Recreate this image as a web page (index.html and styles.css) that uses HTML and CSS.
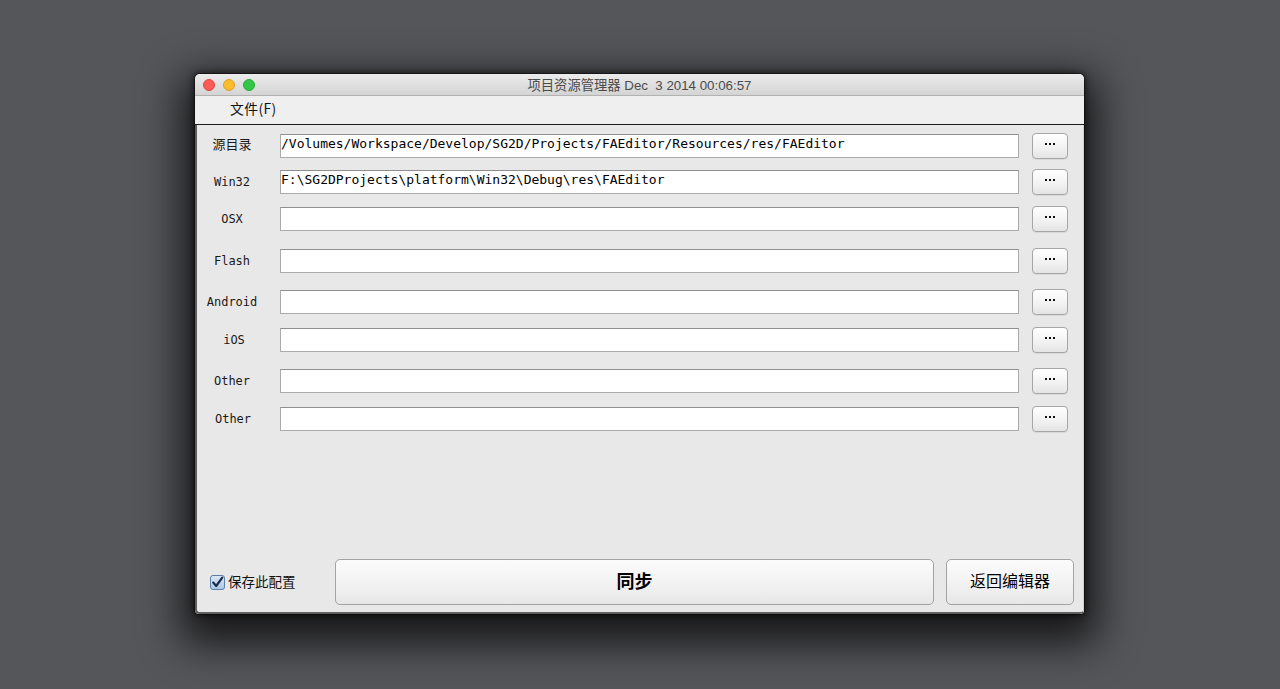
FILE: index.html
```html
<!DOCTYPE html>
<html lang="zh">
<head>
<meta charset="utf-8">
<title>项目资源管理器</title>
<link rel="stylesheet" href="styles.css">
</head>
<body>
<div class="window">
  <div class="titlebar">
    <div class="lights">
      <span class="light red"></span>
      <span class="light yellow"></span>
      <span class="light green"></span>
    </div>
    <div class="title">项目资源管理器 Dec&nbsp;&nbsp;3 2014 00:06:57</div>
  </div>
  <div class="menubar"><span class="menu-item">文件(F)</span></div>
  <div class="content">
    <div class="rows">
      <div class="row">
        <span class="label cjk">源目录</span>
        <div class="field">/Volumes/Workspace/Develop/SG2D/Projects/FAEditor/Resources/res/FAEditor</div>
        <button class="browse"><span class="dots"></span></button>
      </div>
      <div class="row g36">
        <span class="label">Win32</span>
        <div class="field">F:\SG2DProjects\platform\Win32\Debug\res\FAEditor</div>
        <button class="browse"><span class="dots"></span></button>
      </div>
      <div class="row g37">
        <span class="label">OSX</span>
        <div class="field"></div>
        <button class="browse"><span class="dots"></span></button>
      </div>
      <div class="row g42">
        <span class="label">Flash</span>
        <div class="field"></div>
        <button class="browse"><span class="dots"></span></button>
      </div>
      <div class="row g41">
        <span class="label">Android</span>
        <div class="field"></div>
        <button class="browse"><span class="dots"></span></button>
      </div>
      <div class="row g38">
        <span class="label shift">iOS</span>
        <div class="field"></div>
        <button class="browse"><span class="dots"></span></button>
      </div>
      <div class="row g41">
        <span class="label">Other</span>
        <div class="field"></div>
        <button class="browse"><span class="dots"></span></button>
      </div>
      <div class="row g38">
        <span class="label shift1">Other</span>
        <div class="field"></div>
        <button class="browse"><span class="dots"></span></button>
      </div>
    </div>
    <div class="bottom">
      <label class="check">
        <svg class="box" width="15" height="15" viewBox="0 0 15 15">
          <defs>
            <linearGradient id="cb" x1="0" y1="0" x2="0" y2="1">
              <stop offset="0" stop-color="#dbe9f7"/>
              <stop offset="1" stop-color="#a9c7e6"/>
            </linearGradient>
          </defs>
          <rect x="0.5" y="0.5" width="14" height="14" rx="2.5" fill="url(#cb)" stroke="#5d7ea5"/>
          <path d="M3.2 7.6 L6.2 11 L12.2 2.6" fill="none" stroke="#1b2d4a" stroke-width="2.2" stroke-linecap="round" stroke-linejoin="round"/>
        </svg>
        <span class="check-text">保存此配置</span>
      </label>
      <button class="big sync">同步</button>
      <button class="big back">返回编辑器</button>
    </div>
  </div>
</div>
</body>
</html>
```

FILE: styles.css
```css
html, body {
  margin: 0;
  padding: 0;
}
body {
  width: 1280px;
  height: 689px;
  background: #55565a;
  overflow: hidden;
  padding: 74px 0 0 195px;
  box-sizing: border-box;
  font-family: "Liberation Sans", "Noto Sans CJK SC", sans-serif;
}
.window {
  width: 889px;
  height: 540px;
  display: flex;
  flex-direction: column;
  background: #e8e8e8;
  border-radius: 5px 5px 4px 4px;
  box-shadow: 0 16px 40px 14px rgba(0, 0, 0, 0.72), 0 0 6px 2px rgba(0, 0, 0, 0.5), 0 0 0 1px rgba(0, 0, 0, 0.4);
  overflow: hidden;
}
.titlebar {
  height: 22px;
  flex: none;
  position: relative;
  background: linear-gradient(#ececec, #d4d4d4);
  border-bottom: 1px solid #b2b2b2;
  box-sizing: border-box;
  display: flex;
  align-items: center;
  justify-content: center;
}
.lights {
  position: absolute;
  left: 8px;
  top: 5px;
  display: flex;
  gap: 8px;
}
.light {
  width: 12px;
  height: 12px;
  border-radius: 50%;
  box-sizing: border-box;
}
.red { background: #fc5b57; border: 1px solid #de4640; }
.yellow { background: #fdbc2e; border: 1px solid #dea126; }
.green { background: #33c748; border: 1px solid #27aa35; }
.title {
  font-size: 13.3px;
  color: #4b4b4b;
  padding-bottom: 1px;
}
.menubar {
  height: 29px;
  flex: none;
  background: #efefef;
  border-bottom: 1px solid #1e1e1e;
  box-sizing: border-box;
  display: flex;
  align-items: center;
  padding-left: 35px;
  padding-bottom: 4px;
}
.menu-item {
  font-family: "Noto Sans CJK SC", sans-serif;
  font-size: 13.8px;
  letter-spacing: 0.4px;
  color: #111;
}
.content {
  flex: 1;
  display: flex;
  flex-direction: column;
  background: #e8e8e8;
  border-left: 2px solid #5f5f5f;
  border-bottom: 2px solid #5f5f5f;
  border-right: 1px solid #cfcfcf;
  border-radius: 0 0 4px 4px;
  padding-top: 9px;
  padding-bottom: 7px;
  box-sizing: border-box;
}
.rows {
  flex: 1;
  display: flex;
  flex-direction: column;
}
.row {
  display: flex;
  align-items: center;
  height: 24px;
}
.g36 { margin-top: 12px; }
.g37 { margin-top: 13px; }
.g38 { margin-top: 14px; }
.g41 { margin-top: 17px; }
.g42 { margin-top: 18px; }
.label {
  width: 70px;
  flex: none;
  text-align: center;
  font-family: "DejaVu Sans Mono", "Noto Sans CJK SC", monospace;
  font-size: 12px;
  color: #1a1a1a;
  padding-bottom: 1px;
  box-sizing: border-box;
}
.label.shift { padding-left: 4px; }
.label.shift1 { padding-left: 2px; }
.label.cjk {
  font-family: "Noto Sans CJK SC", sans-serif;
  font-size: 13px;
  padding-bottom: 5px;
}
.field {
  width: 739px;
  height: 24px;
  margin-left: 13px;
  flex: none;
  box-sizing: border-box;
  background: #fff;
  border: 1px solid #ababab;
  border-top-color: #8f8f8f;
  font-family: "DejaVu Sans Mono", monospace;
  font-size: 13px;
  line-height: 18px;
  padding-left: 0;
  color: #000;
  white-space: nowrap;
  overflow: hidden;
}
.browse {
  width: 36px;
  height: 26px;
  margin-left: 13px;
  flex: none;
  border: 1px solid #a6a6a6;
  border-radius: 4px;
  background: linear-gradient(#ffffff, #f1f1f1 60%, #e4e4e4);
  box-shadow: 0 1px 0 rgba(0, 0, 0, 0.06);
  padding: 0;
  display: flex;
  justify-content: center;
  align-items: flex-start;
  padding-top: 9px;
  box-sizing: border-box;
}
.dots {
  width: 10px;
  height: 2px;
  background: radial-gradient(circle at 1px 1px, #111 0.9px, transparent 1.1px) 0 0 / 4px 2px repeat-x;
}
.bottom {
  display: flex;
  align-items: center;
  height: 46px;
  padding-left: 13px;
}
.check {
  width: 125px;
  flex: none;
  display: flex;
  align-items: center;
  gap: 3px;
}
.box { flex: none; }
.check-text {
  font-family: "Noto Sans CJK SC", sans-serif;
  font-size: 13.5px;
  color: #111;
  padding-bottom: 3px;
}
.big {
  height: 46px;
  box-sizing: border-box;
  border: 1px solid #a3a3a3;
  border-radius: 5px;
  background: linear-gradient(#fbfbfb, #f4f4f4 45%, #e7e7e7);
  font-family: "Noto Sans CJK SC", sans-serif;
  color: #000;
  flex: none;
  padding: 0 0 4px 0;
}
.sync {
  width: 599px;
  font-size: 18px;
  font-weight: bold;
}
.back {
  width: 128px;
  margin-left: 12px;
  font-size: 16px;
}
```
